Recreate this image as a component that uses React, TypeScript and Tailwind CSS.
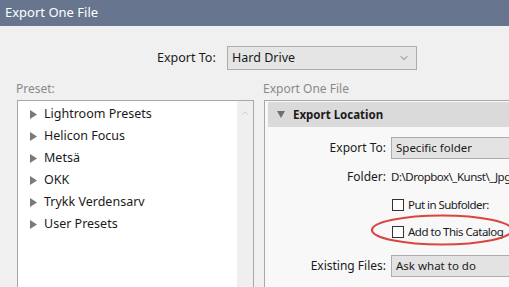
import { ChevronDown, ChevronUp } from "lucide-react";

const presets = [
  "Lightroom Presets",
  "Helicon Focus",
  "Metsä",
  "OKK",
  "Trykk Verdensarv",
  "User Presets",
];

function Caret() {
  return (
    <svg width="7" height="9" viewBox="0 0 7 9" className="shrink-0">
      <path d="M0 0 L7 4.5 L0 9 Z" fill="#7a7a7a" />
    </svg>
  );
}

function Checkbox() {
  return <span className="inline-block h-[12px] w-[12px] shrink-0 border border-[#333] bg-white" />;
}

function Row({ label, children, className = "" }: { label: string; children: React.ReactNode; className?: string }) {
  return (
    <div className={`flex items-center ${className}`}>
      <span className="w-[122px] shrink-0 pr-[1px] text-right">{label}</span>
      <div className="ml-[4px] flex flex-1 items-center text-[11.5px]">{children}</div>
    </div>
  );
}

export default function App() {
  return (
    <div className="relative h-[287px] w-[509px] overflow-hidden bg-[#f0f0f0] font-['Noto_Sans',sans-serif] text-[12px] text-[#1a1a1a]">
      {/* barra de título */}
      <div className="flex h-[26px] items-center bg-[#67758f] pl-[5px] text-[13px] text-white">Export One File</div>

      {/* Export To principal */}
      <div className="mt-[20px] flex h-[24px] items-center">
        <span className="ml-[157px] w-[70px] text-[12.5px]">Export To:</span>
        <div className="flex h-[24px] w-[190px] items-center justify-between border border-[#adadad] bg-[#e5e5e5] pl-[4px] pr-[6px] text-[12.5px]">
          <span>Hard Drive</span>
          <ChevronDown size={12} strokeWidth={1.5} className="text-[#555]" />
        </div>
      </div>

      {/* rótulos */}
      <div className="mt-[11px] flex h-[15px] items-center text-[#8a8a8a]">
        <span className="w-[263px] pl-[16px]">Preset:</span>
        <span>Export One File</span>
      </div>

      {/* painéis */}
      <div className="mt-[4px] flex items-start gap-[10px] pl-[17px]">
        <div className="flex h-[200px] w-[237px] shrink-0 border border-[#a8a8a8] bg-white">
          <ul className="flex-1 pt-[2px] text-[12.5px]">
            {presets.map(p => (
              <li key={p} className="flex h-[22px] items-center gap-[7px] pl-[12px]">
                <Caret />
                <span>{p}</span>
              </li>
            ))}
          </ul>
          <div className="flex w-[16px] justify-center bg-[#efefef] pt-[7px]">
            <ChevronUp size={10} strokeWidth={1.5} className="text-[#b5b5b5]" />
          </div>
        </div>

        <div className="h-[200px] w-[260px] shrink-0 border border-[#a8a8a8] bg-[#f8f8f8] pl-[3px] pt-[1px]">
          <div className="flex h-[25px] items-center gap-[8px] bg-[#dadada] pl-[9px] text-[11.5px] font-bold">
            <svg width="8" height="7" viewBox="0 0 8 7">
              <path d="M0 0 L8 0 L4 7 Z" fill="#6e6e6e" />
            </svg>
            <span>Export Location</span>
          </div>

          <div className="-ml-[3px]">
            <Row label="Export To:" className="mt-[10px] h-[22px]">
              <div className="flex h-[22px] w-[200px] items-center border border-[#adadad] bg-[#e3e3e3] pl-[4px]">Specific folder</div>
            </Row>
            <Row label="Folder:" className="h-[36px]">
              <span className="whitespace-nowrap tracking-[-0.5px]">D:\Dropbox\_Kunst\_Jpg</span>
            </Row>
            <Row label="" className="h-[20px]">
              <span className="ml-[1px] flex items-center gap-[4px] whitespace-nowrap tracking-[-0.55px]">
                <Checkbox />
                Put in Subfolder:
              </span>
            </Row>
            <Row label="" className="h-[34px]">
              <span className="ml-[1px] flex items-center gap-[4px] whitespace-nowrap tracking-[-0.5px]">
                <Checkbox />
                Add to This Catalog
              </span>
            </Row>
            <Row label="Existing Files:" className="mt-[6px] h-[22px]">
              <div className="flex h-[22px] w-[200px] items-center border border-[#adadad] bg-[#e3e3e3] pl-[4px]">Ask what to do</div>
            </Row>
          </div>
        </div>
      </div>

      {/* marcação vermelha */}
      <svg className="pointer-events-none absolute left-[369px] top-[213px]" width="150" height="36" viewBox="0 0 150 36">
        <ellipse cx="73" cy="17" rx="70" ry="14.5" fill="none" stroke="#d9463f" strokeWidth="2.2" />
      </svg>
    </div>
  );
}
